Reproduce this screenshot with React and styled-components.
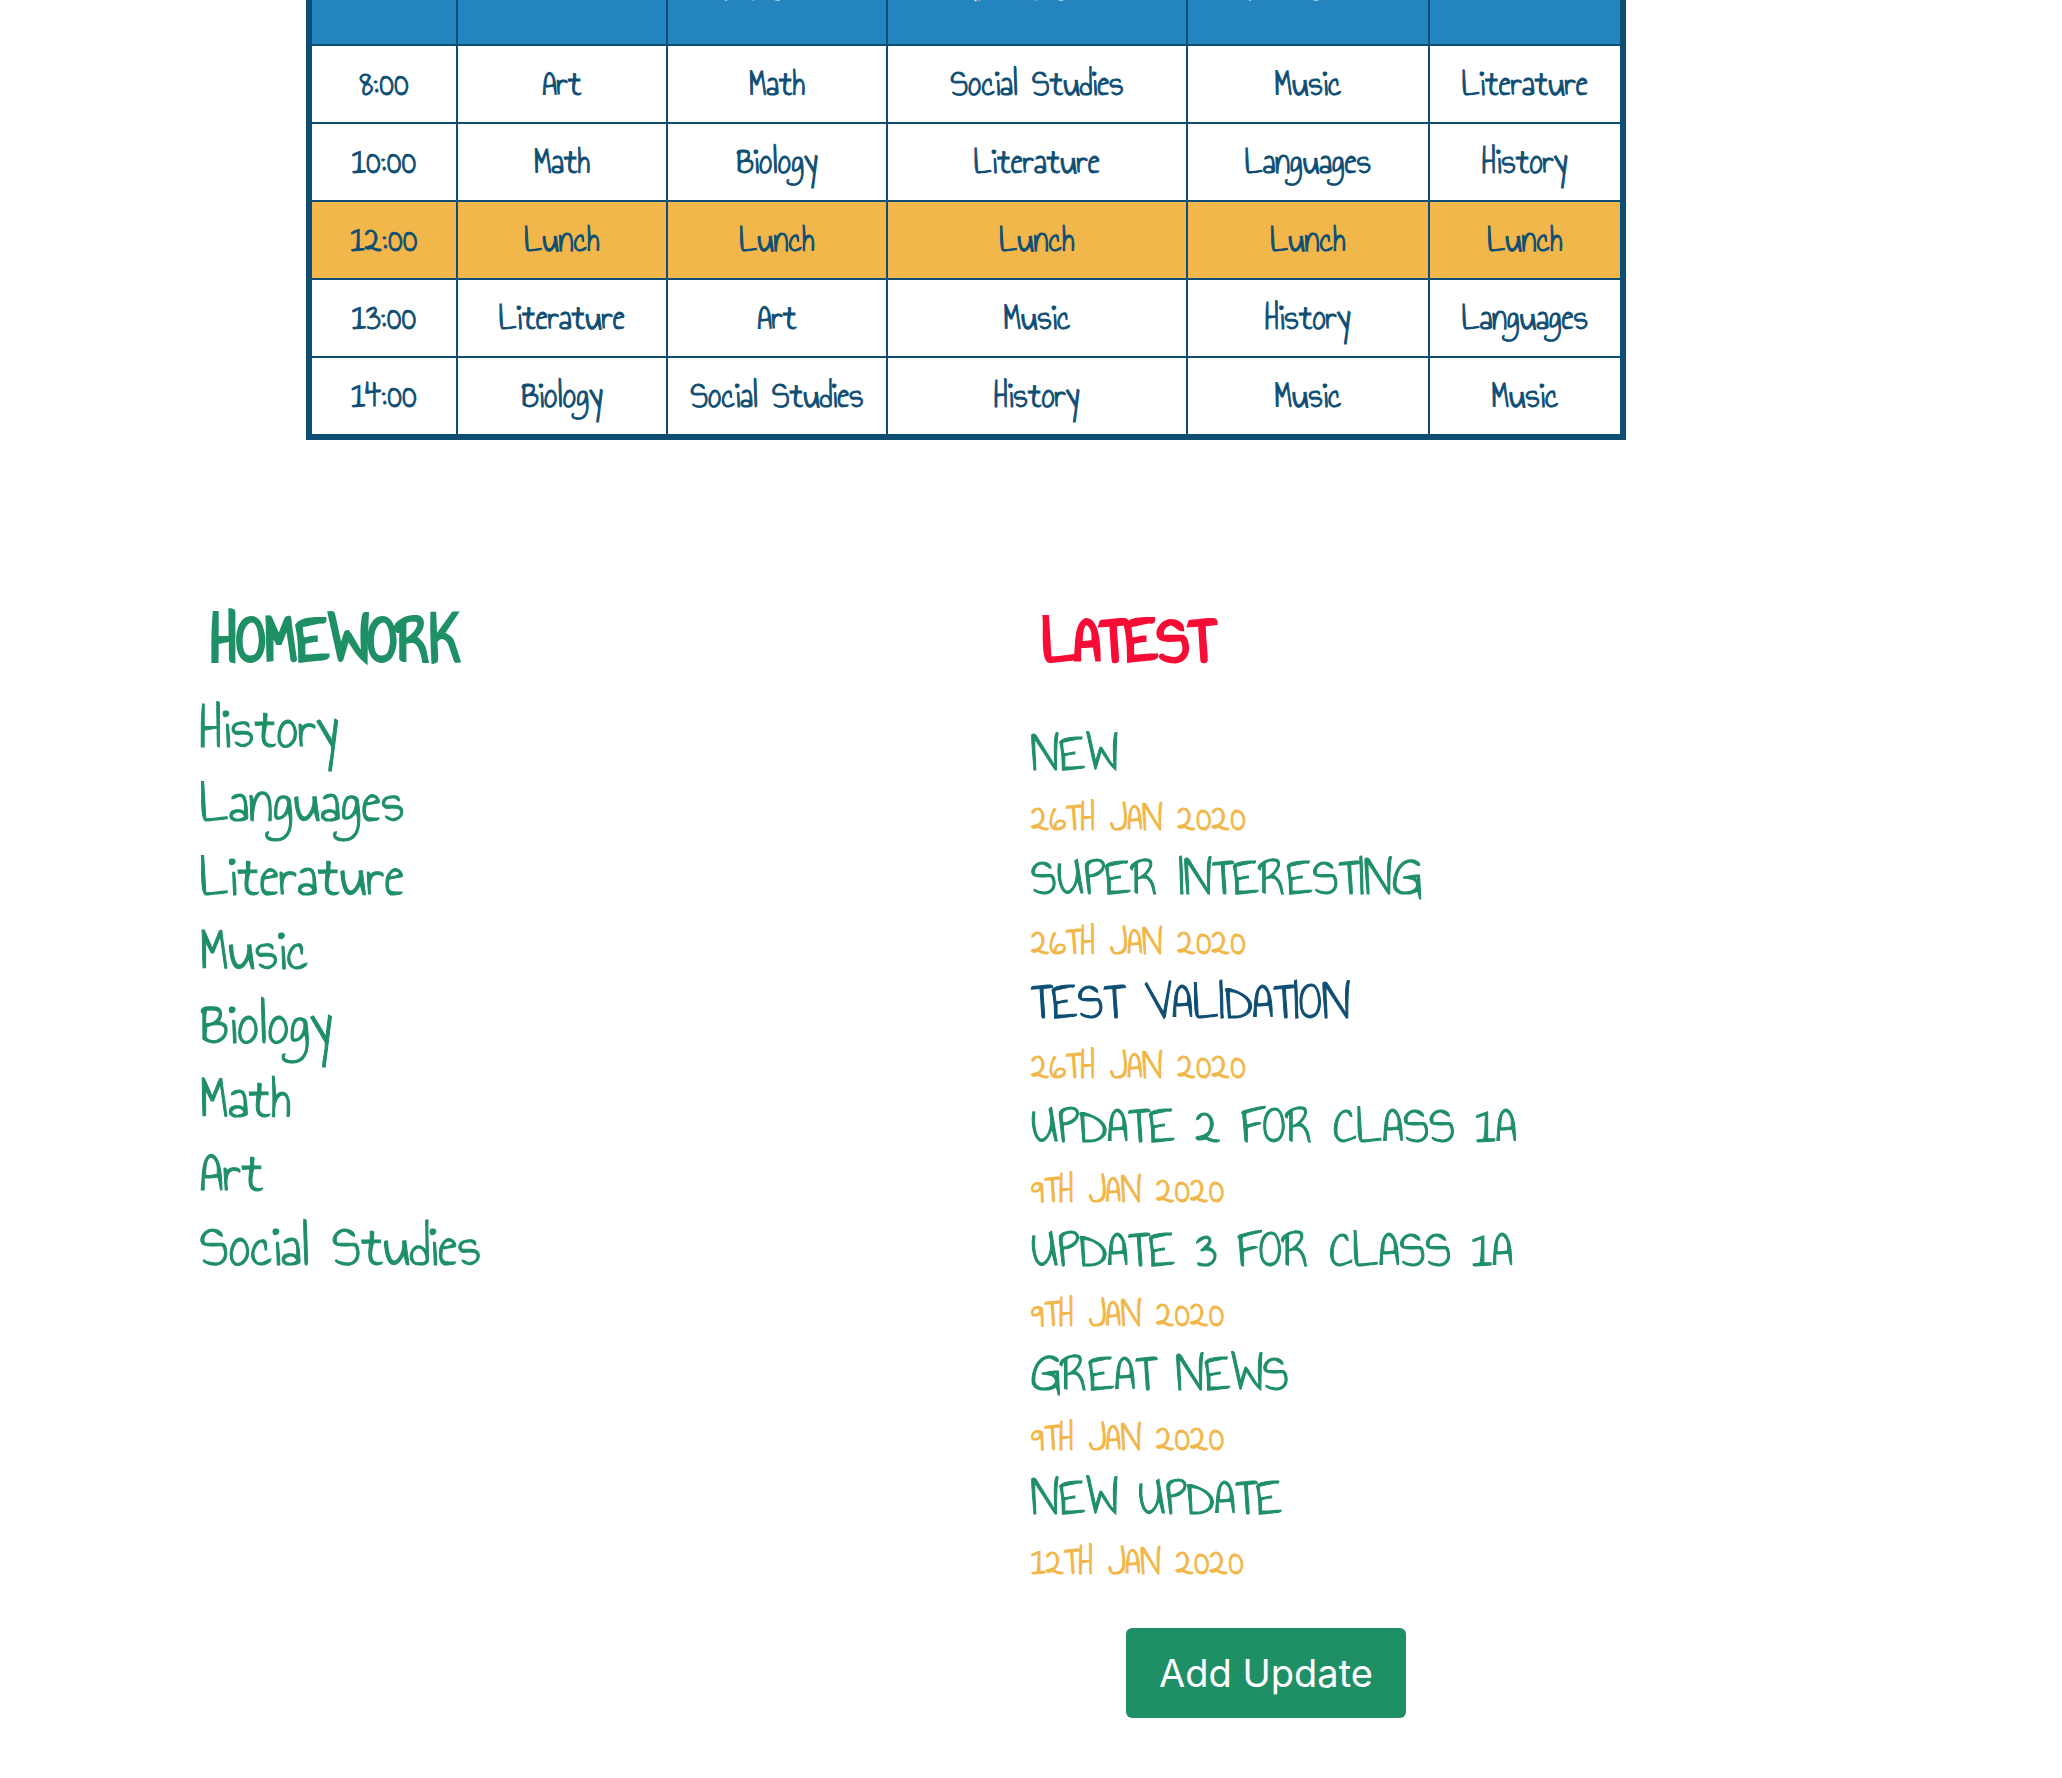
import React from "react";
import styled, { createGlobalStyle } from "styled-components";

const color = {
  navy: "#0f4e73",
  blue: "#2484c0",
  amber: "#f1b74a",
  green: "#1f8f66",
  red: "#f60c35",
};

const hand = '"Annie Use Your Telescope", "Shadows Into Light Two", "Liberation Sans Narrow", "Liberation Sans", sans-serif';

const GlobalStyle = createGlobalStyle`
  *, *::before, *::after { box-sizing: border-box; }
  body {
    margin: 0;
    background: #fff;
    font-family: ${hand};
    -webkit-text-stroke: 1px currentColor;
  }
`;

const Page = styled.main`
  overflow: hidden;
  padding-bottom: 60px;
`;

const TimetableSection = styled.section`
  margin-top: -60px;
  padding-right: 130px;
`;

const Timetable = styled.table`
  width: 1320px;
  max-width: 100%;
  margin: 0 auto;
  table-layout: fixed;
  border-collapse: separate;
  border-spacing: 0;
  border: 6px solid ${color.navy};
  color: ${color.navy};
  font-size: 37px;
  line-height: 40px;
  text-align: center;

  th, td {
    border-right: 2px solid ${color.navy};
    border-bottom: 2px solid ${color.navy};
  }
  th:last-child, td:last-child { border-right: 0; }
  tbody tr:last-child td { border-bottom: 0; }
`;

const Column = styled.col`
  width: ${(p) => p.$share}px;
`;

const DayHead = styled.th`
  height: 100px;
  padding: 0 0 36px;
  background: ${color.blue};
  color: #fff;
  font-size: 37px;
  line-height: 40px;
  vertical-align: bottom;
  text-transform: uppercase;
`;

const LessonRow = styled.tr`
  background: ${(p) => (p.$lunch ? color.amber : "transparent")};
`;

const Lesson = styled.td`
  height: 78px;
  padding: 0;

  tr:last-child > & { height: 76px; }
`;

const Board = styled.div`
  display: grid;
  grid-template-columns: 1fr 1fr;
  padding-top: 160px;
`;

const Panel = styled.section`
  padding-left: ${(p) => p.$inset}px;
`;

const PanelTitle = styled.h2`
  margin: 0;
  padding-left: 12px;
  color: ${(p) => p.$tone};
  font-size: 66px;
  line-height: 82px;
  text-transform: uppercase;
  -webkit-text-stroke-width: 2px;
`;

const PlainList = styled.ul`
  margin: 0;
  padding: ${(p) => p.$top}px 0 0;
  list-style: none;
`;

const SubjectLink = styled.a`
  display: block;
  color: ${color.green};
  font-size: 60px;
  line-height: 74px;
  text-decoration: none;
`;

const UpdateLink = styled.a`
  display: block;
  color: ${(p) => (p.$active ? color.navy : color.green)};
  font-size: 54px;
  line-height: 64px;
  text-decoration: none;
  text-transform: uppercase;
`;

const UpdateDate = styled.time`
  display: block;
  padding-top: 4px;
  color: ${color.amber};
  font-size: 39px;
  line-height: 56px;
  text-transform: uppercase;
`;

const AddButton = styled.button`
  display: block;
  width: 280px;
  height: 90px;
  margin: 38px 0 0 95px;
  border: 0;
  border-radius: 6px;
  background: ${color.green};
  color: #fff;
  font-family: Inter, Roboto, sans-serif;
  font-size: 38px;
  -webkit-text-stroke-width: 0;
  cursor: pointer;
`;

const columns = [
  { name: "Hour", share: 146 },
  { name: "Monday", share: 210 },
  { name: "Tuesday", share: 220 },
  { name: "Wednesday", share: 300 },
  { name: "Thursday", share: 242 },
  { name: "Friday", share: 190 },
];

const rows = [
  ["8:00", "Art", "Math", "Social Studies", "Music", "Literature"],
  ["10:00", "Math", "Biology", "Literature", "Languages", "History"],
  ["12:00", "Lunch", "Lunch", "Lunch", "Lunch", "Lunch"],
  ["13:00", "Literature", "Art", "Music", "History", "Languages"],
  ["14:00", "Biology", "Social Studies", "History", "Music", "Music"],
];

const subjects = ["History", "Languages", "Literature", "Music", "Biology", "Math", "Art", "Social Studies"];

const updates = [
  { title: "New", date: "26th Jan 2020", iso: "2020-01-26" },
  { title: "Super interesting", date: "26th Jan 2020", iso: "2020-01-26" },
  { title: "Test validation", date: "26th Jan 2020", iso: "2020-01-26", active: true },
  { title: "Update 2 for class 1A", date: "9th Jan 2020", iso: "2020-01-09" },
  { title: "Update 3 for class 1A", date: "9th Jan 2020", iso: "2020-01-09" },
  { title: "Great news", date: "9th Jan 2020", iso: "2020-01-09" },
  { title: "New update", date: "12th Jan 2020", iso: "2020-01-12" },
];

export default function App() {
  return (
    <Page>
      <GlobalStyle />
      <TimetableSection>
        <Timetable>
          <colgroup>
            {columns.map((c) => (
              <Column key={c.name} $share={c.share} />
            ))}
          </colgroup>
          <thead>
            <tr>
              {columns.map((c) => (
                <DayHead key={c.name} scope="col">{c.name}</DayHead>
              ))}
            </tr>
          </thead>
          <tbody>
            {rows.map((row) => (
              <LessonRow key={row[0]} $lunch={row[1] === "Lunch"}>
                {row.map((cell, i) => (
                  <Lesson key={i}>{cell}</Lesson>
                ))}
              </LessonRow>
            ))}
          </tbody>
        </Timetable>
      </TimetableSection>

      <Board>
        <Panel $inset={200}>
          <PanelTitle $tone={color.green}>Homework</PanelTitle>
          <PlainList $top={10}>
            {subjects.map((s) => (
              <li key={s}>
                <SubjectLink href="#homework">{s}</SubjectLink>
              </li>
            ))}
          </PlainList>
        </Panel>
        <Panel $inset={0}>
          <PanelTitle $tone={color.red}>Latest</PanelTitle>
          <PlainList $top={40}>
            {updates.map((u) => (
              <li key={u.title}>
                <UpdateLink href="#update" $active={u.active}>{u.title}</UpdateLink>
                <UpdateDate dateTime={u.iso}>{u.date}</UpdateDate>
              </li>
            ))}
          </PlainList>
          <AddButton type="button">Add Update</AddButton>
        </Panel>
      </Board>
    </Page>
  );
}
